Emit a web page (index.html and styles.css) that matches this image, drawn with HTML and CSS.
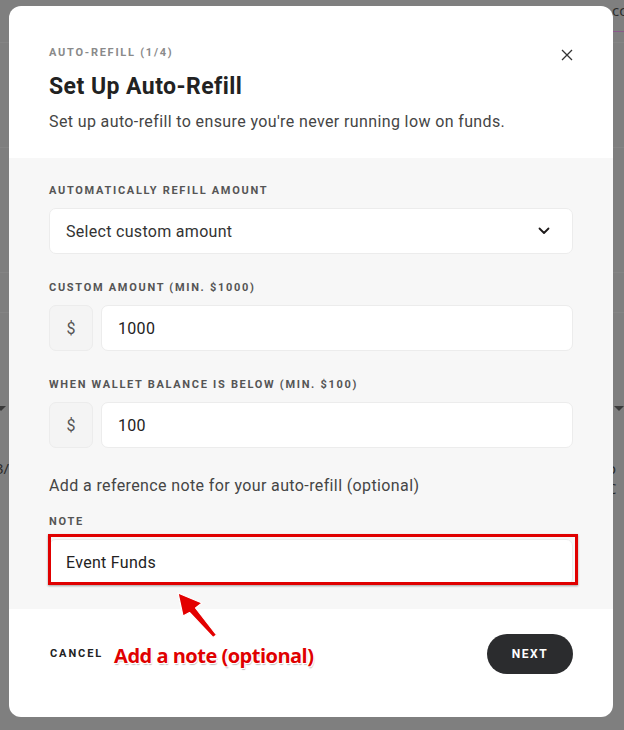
FILE: index.html
```html
<!DOCTYPE html>
<html lang="en">
<head>
<meta charset="utf-8">
<title>Set Up Auto-Refill</title>
<link rel="stylesheet" href="styles.css">
</head>
<body>
<div class="backdrop">
  <div class="bg-line bg-line-1"></div>
  <div class="bg-line bg-line-2"></div>
  <div class="bg-line bg-line-3"></div>
  <div class="bg-line bg-line-4"></div>
  <span class="bg-text bg-text-tr">cc</span>
  <span class="bg-text bg-text-l">3/</span>
  <span class="bg-text bg-text-r">o C</span>
  <span class="bg-caret"></span>
  <span class="bg-caret bg-caret-l"></span>

  <div class="modal">
    <header class="modal-header">
      <div class="step">AUTO-REFILL (1/4)</div>
      <h1 class="title">Set Up Auto-Refill</h1>
      <p class="subtitle">Set up auto-refill to ensure you're never running low on funds.</p>
      <button class="close" aria-label="Close">
        <svg width="12" height="12" viewBox="0 0 12 12"><path d="M1 1L11 11M11 1L1 11" stroke="#333" stroke-width="1.3" fill="none"/></svg>
      </button>
    </header>

    <section class="modal-body">
      <div class="field-label">AUTOMATICALLY REFILL AMOUNT</div>
      <div class="select">
        <span>Select custom amount</span>
        <svg width="12" height="8" viewBox="0 0 12 8"><path d="M1.5 1.5L6 6L10.5 1.5" stroke="#1e1a1a" stroke-width="1.8" fill="none" stroke-linecap="round" stroke-linejoin="round"/></svg>
      </div>

      <div class="field-label gap">CUSTOM AMOUNT (MIN. $1000)</div>
      <div class="money-row">
        <div class="prefix">$</div>
        <div class="input">1000</div>
      </div>

      <div class="field-label gap">WHEN WALLET BALANCE IS BELOW (MIN. $100)</div>
      <div class="money-row">
        <div class="prefix">$</div>
        <div class="input">100</div>
      </div>

      <p class="hint">Add a reference note for your auto-refill (optional)</p>

      <div class="field-label note-label">NOTE</div>
      <div class="note-wrap">
        <div class="input note-input">Event Funds</div>
        <div class="highlight"></div>
      </div>
    </section>

    <footer class="modal-footer">
      <button class="cancel">CANCEL</button>
      <span class="annotation">Add a note (optional)</span>
      <button class="next">NEXT</button>
      <svg class="arrow" width="56" height="58" viewBox="0 0 56 58">
        <path d="M8 8 L32 18 L25.5 23 L46.5 50 L43 52.5 L19.5 27.5 L13 31 Z" fill="#e30000" stroke="#fff" stroke-width="1.2" stroke-linejoin="round"/>
      </svg>
    </footer>
  </div>
</div>
</body>
</html>
```
FILE: styles.css
```css
* { box-sizing: border-box; }
html, body { margin: 0; padding: 0; }
body {
  width: 624px;
  height: 730px;
  overflow: hidden;
  font-family: Roboto, "Liberation Sans", sans-serif;
  background: #7f7f7f;
}
.backdrop {
  position: relative;
  width: 624px;
  height: 730px;
  background: #7f7f7f;
  padding: 6px 0 0 9px;
}
.bg-line { position: absolute; left: 0; right: 0; height: 1px; background: #858585; }
.bg-line-1 { top: 42px; }
.bg-line-2 { top: 147px; }
.bg-line-3 { top: 272px; }
.bg-line-4 { top: 312px; }
.bg-line-1::after { content: ""; position: absolute; right: 0; top: -11px; width: 12px; height: 1px; background: #8a5a8a; }
.bg-text { position: absolute; font-size: 15px; color: #1f1f1f; font-family: "Open Sans", sans-serif; }
.bg-text-tr { top: 0; left: 612px; color: #2a2a2a; }
.bg-text-l { top: 458px; left: -5px; color: #2a2a2a; }
.bg-text-r { top: 458px; left: 607px; color: #2a2a2a; }
.bg-caret { position: absolute; top: 406px; left: 614px; width: 0; height: 0; border-left: 5px solid transparent; border-right: 5px solid transparent; border-top: 5px solid #3a3a3a; }
.bg-caret-l { left: -4px; }

.modal {
  position: relative;
  width: 604px;
  height: 711px;
  background: #fff;
  border-radius: 12px;
  overflow: hidden;
  display: flex;
  flex-direction: column;
}

.modal-header {
  position: relative;
  padding: 40px 40px 0;
  height: 152px;
}
.step {
  font-size: 11px;
  line-height: 14px;
  font-weight: 700;
  letter-spacing: 1.75px;
  color: #8a8a8a;
}
.title {
  margin: 13px 0 0;
  font-size: 23px;
  line-height: 28px;
  font-weight: 700;
  letter-spacing: 0.45px;
  color: #222;
}
.subtitle {
  margin: 10px 0 0;
  font-size: 16px;
  line-height: 22px;
  letter-spacing: 0.38px;
  color: #454545;
}
.close {
  position: absolute;
  top: 43px;
  right: 40px;
  width: 12px;
  height: 12px;
  padding: 0;
  border: 0;
  background: none;
  display: flex;
}

.modal-body {
  background: #f7f7f7;
  height: 451px;
  padding: 26px 40px 25px;
}
.field-label {
  font-size: 11px;
  line-height: 14px;
  font-weight: 700;
  letter-spacing: 1.7px;
  color: #555;
  margin-bottom: 10px;
}
.field-label.gap { margin-top: 27px; }
.select {
  height: 46px;
  background: #fff;
  border: 1px solid #ececec;
  border-radius: 7px;
  display: flex;
  align-items: center;
  justify-content: space-between;
  padding: 0 22px 0 16px;
  font-size: 16px;
  letter-spacing: 0.3px;
  color: #333;
}
.money-row {
  display: flex;
  gap: 8px;
  height: 46px;
}
.prefix {
  width: 44px;
  background: #f4f4f4;
  border: 1px solid #ececec;
  border-radius: 7px;
  display: flex;
  align-items: center;
  justify-content: center;
  font-size: 16px;
  color: #555;
}
.input {
  flex: 1;
  background: #fff;
  border: 1px solid #ececec;
  border-radius: 7px;
  display: flex;
  align-items: center;
  padding: 0 16px;
  font-size: 16px;
  letter-spacing: 0.3px;
  color: #222;
}
.hint {
  margin: 27px 0 0;
  font-size: 16px;
  line-height: 22px;
  letter-spacing: 0.38px;
  color: #454545;
}
.note-label { margin-top: 18px; margin-bottom: 10px; }
.note-wrap {
  position: relative;
  height: 46px;
  display: flex;
}
.note-input { height: 46px; }
.highlight {
  position: absolute;
  top: -5px;
  left: -1px;
  right: -5px;
  bottom: 0;
  border: 3px solid #e00000;
  box-shadow: 0 1px 2px rgba(0,0,0,0.35);
}

.modal-footer {
  position: relative;
  flex: 1;
  display: flex;
  align-items: flex-start;
  padding: 25px 40px 0 41px;
}
.cancel {
  margin-top: 14px;
  padding: 0;
  border: 0;
  background: none;
  font-family: inherit;
  font-size: 11px;
  line-height: 12px;
  font-weight: 700;
  letter-spacing: 1.9px;
  color: #222;
}
.annotation {
  margin: 9px 0 0 11px;
  font-family: "Open Sans", sans-serif;
  font-weight: 700;
  font-size: 20px;
  line-height: 26px;
  letter-spacing: -0.5px;
  color: #e00000;
  text-shadow: 1px 1px 0 #fff, -1px -1px 0 #fff, 1px -1px 0 #fff, -1px 1px 0 #fff, 1px 2px 1px rgba(0,0,0,0.25);
}
.next {
  margin-left: auto;
  width: 86px;
  height: 40px;
  border: 0;
  border-radius: 20px;
  background: #2b2c2e;
  color: #fff;
  font-family: inherit;
  font-size: 12px;
  font-weight: 700;
  letter-spacing: 1.6px;
}
.arrow {
  position: absolute;
  left: 161px;
  top: -24px;
}
```
